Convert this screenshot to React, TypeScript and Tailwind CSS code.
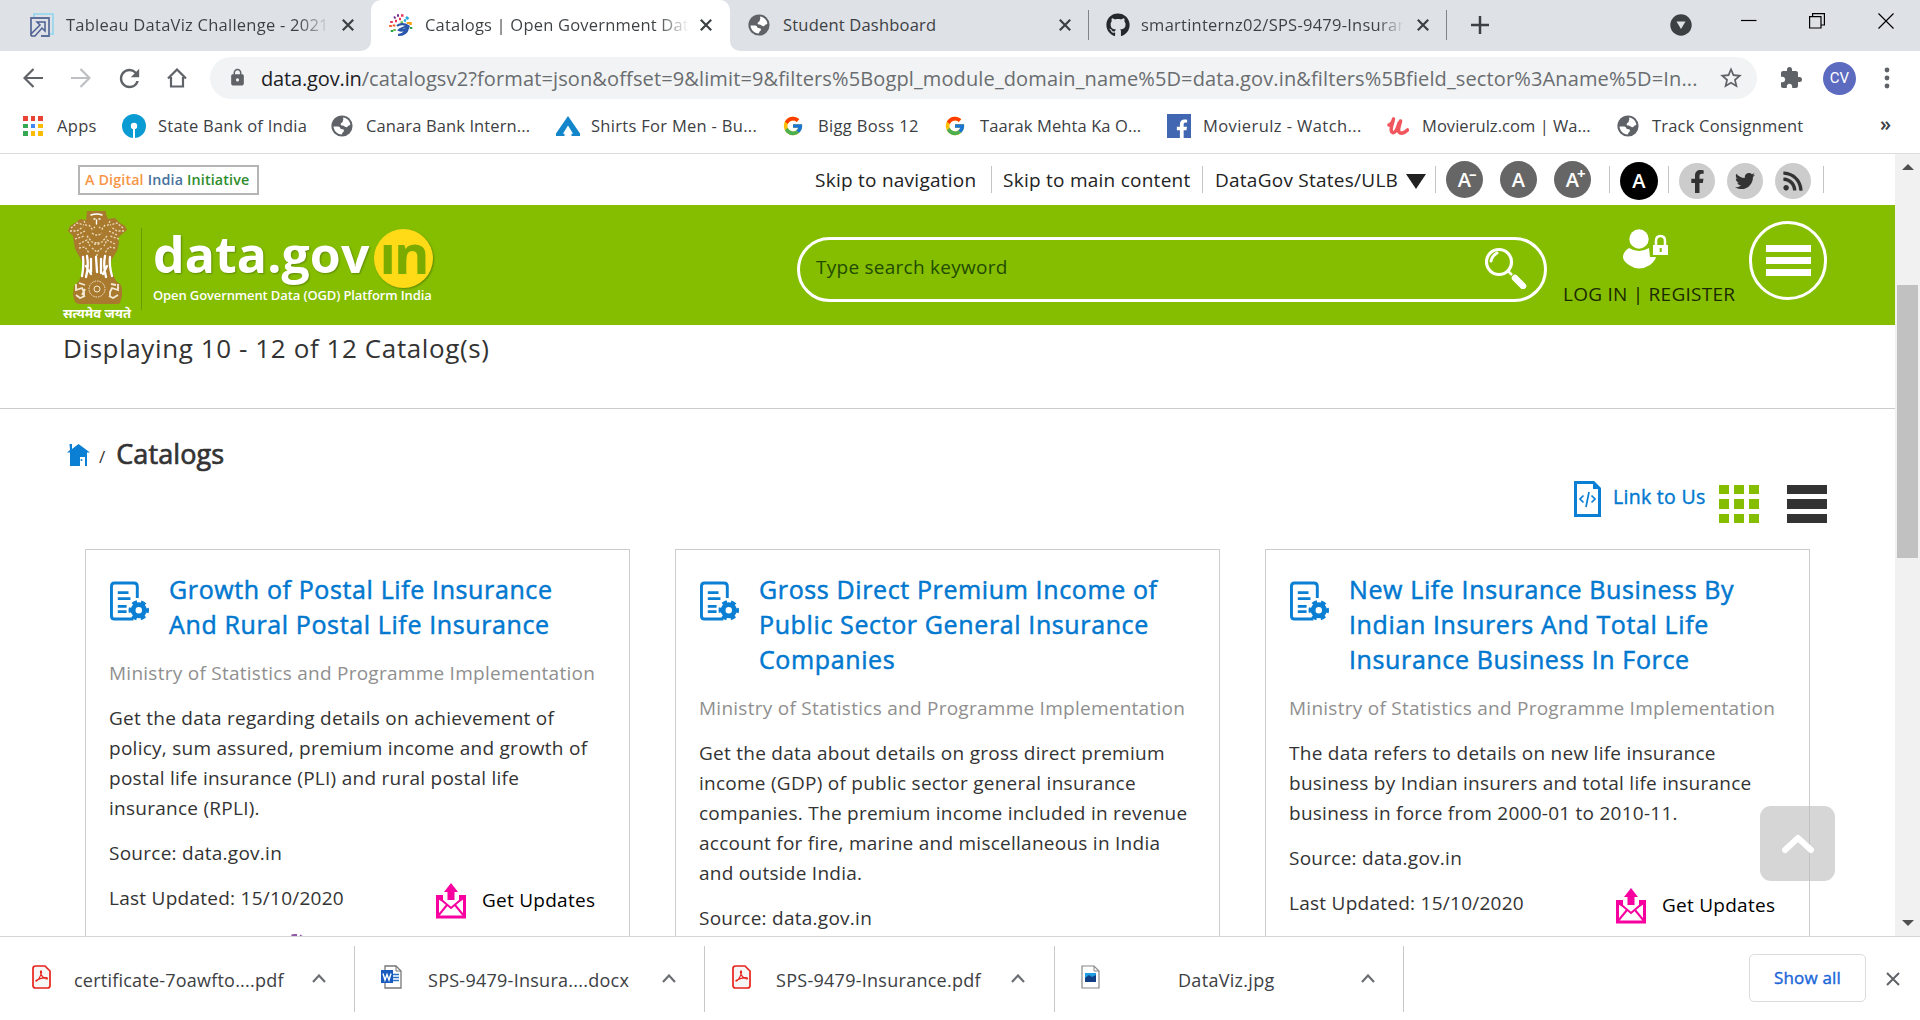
import React from "react";
import { FaFacebookF, FaGithub, FaTwitter, FaRss } from "react-icons/fa";
import { FcGoogle } from "react-icons/fc";
import { MdExtension, MdLock, MdRefresh, MdStarBorder } from "react-icons/md";

function Globe({ className = "" }: { className?: string }) {
  return (
    <svg viewBox="0 0 22 22" className={"h-[22px] w-[22px] shrink-0 " + className}>
      <circle cx="11" cy="11" r="10.6" fill="#5f6368" />
      <path d="M12.2 2.6c3.6.5 6.6 3.300 7.200 7-1 1.400-2 .7-2.700 1.900-.8 1.300-2.300.5-3.400-.3-1-.8-2.600-.3-3.400-1.200-.8-1.200.5-2.300 1.300-2.600 1-.4.3-1.600 1-2.300.5-.5-.4-1.400 0-2.500z" fill="#fff" />
      <path d="M2.500 11.500c2 .2 4-.5 5.600.3 1.400.7.7 1.900 2 2.300 1.500.4 2.600 0 2.800 1.300.2 1.500-1.500 1.500-1.600 2.600 0 .8-.3 1-.8 1.500-4.300-.2-7.600-3.500-8-8z" fill="#fff" />
    </svg>
  );
}

function TabClose({ className = "" }: { className?: string }) {
  return (
    <svg viewBox="0 0 12 12" className={"h-3 w-3 shrink-0 " + className} stroke="#3c4043" strokeWidth="2.2">
      <path d="M.8.8l10.400 10.400M11.200.8L.8 11.200" />
    </svg>
  );
}

function TabStrip() {
  return (
    <header className="flex h-[51px] bg-[#dee1e6] text-[16.500px] text-[#3c4043]">
      <div className="flex h-[51px] w-[371px] bg-white">
        <div className="flex w-full items-center rounded-br-[10px] bg-[#dee1e6] pb-px">
          <svg viewBox="0 0 24 24" className="ml-[30px] h-6 w-6 shrink-0" fill="none">
            <path d="M4 4V1h19v20h-4" stroke="#8fd6ee" strokeWidth="1.600" />
            <path d="M1 23V5h18v18h-8" stroke="#5d6f9b" strokeWidth="1.800" />
            <path d="M1 23l4 0 7-8 3 3V9H7l3 3-9 9" stroke="#4e5f93" strokeWidth="1.500" />
          </svg>
          <span className="ml-3 w-[264px] overflow-hidden whitespace-nowrap bg-gradient-to-r from-[#3c4043] from-88% to-transparent bg-clip-text text-transparent tracking-[0.25px]">Tableau DataViz Challenge - 2021</span>
          <TabClose className="ml-3" />
        </div>
      </div>
      <div className="flex w-[359px] items-center rounded-t-[10px] bg-white pb-px">
        <svg viewBox="0 0 24 24" className="ml-[18px] h-6 w-6 shrink-0" fill="none" strokeWidth="2.600">
          <path d="M8 2.500h2M5 5l1.500-1" stroke="#7b2c94" />
          <path d="M12 2.500h2.500M10 6h2" stroke="#e8365d" />
          <path d="M17 4l2.500 2M15 7l2 1" stroke="#25a9e0" />
          <path d="M21.500 9v3M19 9v2" stroke="#f6a21b" />
          <path d="M2.500 8v2M6 8h2" stroke="#e8365d" />
          <path d="M1.500 12v2M5 11.500v2" stroke="#f05a28" />
          <path d="M3 17v2M22 14v2" stroke="#2aa44c" />
          <path d="M5.500 16v2M11.500 9.500h2.500" stroke="#70bf44" />
          <path d="M8 13c2-2 7-3 11 0-3 1-7 2-9 4 2 1 6 0 9-2-1 5-5 7-10 7 3 0 6-2 8-4" stroke="#2b57ac" strokeWidth="2.200" />
        </svg>
        <span className="ml-3 w-[264px] overflow-hidden whitespace-nowrap bg-gradient-to-r from-[#3c4043] from-88% to-transparent bg-clip-text text-transparent tracking-[0.2px]">Catalogs | Open Government Dat</span>
        <TabClose className="ml-[11px]" />
      </div>
      <div className="flex flex-1 bg-white">
        <div className="flex flex-1 items-center rounded-bl-[10px] bg-[#dee1e6] pb-px">
          <Globe className="ml-[18px]" />
          <span className="ml-[13px] w-[276px] whitespace-nowrap tracking-[0.2px]">Student Dashboard</span>
          <TabClose />
          <div className="ml-[17px] h-[30px] w-px bg-[#808387]" />
          <FaGithub className="ml-[17px] h-6 w-6 shrink-0 text-[#24292e]" />
          <span className="ml-[11px] w-[263px] overflow-hidden whitespace-nowrap bg-gradient-to-r from-[#3c4043] from-90% to-transparent bg-clip-text text-transparent tracking-[0.25px]">smartinternz02/SPS-9479-Insurar</span>
          <TabClose className="ml-[13px]" />
          <div className="ml-[17px] h-[30px] w-px bg-[#808387]" />
          <svg viewBox="0 0 18 18" className="ml-6 h-[18px] w-[18px] shrink-0" stroke="#3c4043" strokeWidth="2.500">
            <path d="M9 0v18M0 9h18" />
          </svg>
          <svg viewBox="0 0 22 22" className="ml-[181px] h-[22px] w-[22px] shrink-0">
            <circle cx="11" cy="11" r="10.700" fill="#3c4043" />
            <path d="M6.500 7.500h9L11 15z" fill="#dee1e6" />
          </svg>
          <svg viewBox="0 0 16 16" className="mb-2 ml-[49px] h-4 w-4 shrink-0" stroke="#000" strokeWidth="1.200">
            <path d="M0 7.500h15.500" />
          </svg>
          <svg viewBox="0 0 16 16" className="mb-2 ml-[52px] h-4 w-4 shrink-0" fill="none" stroke="#000" strokeWidth="1.200">
            <path d="M.6 3.600h11.400v11.400H.6zM3.600 3.600V.6H15.400V12H12" />
          </svg>
          <svg viewBox="0 0 16 16" className="mb-2 ml-[53px] h-4 w-4 shrink-0" stroke="#000" strokeWidth="1.200">
            <path d="M.5.500l15 15M15.500.500l-15 15" />
          </svg>
        </div>
      </div>
    </header>
  );
}

function Toolbar() {
  return (
    <div className="flex h-[54px] items-center bg-white pl-[23px]">
      <svg viewBox="0 0 20 20" className="h-5 w-5" fill="none" stroke="#5f6368" strokeWidth="2.200">
        <path d="M20 10H2M10.500 1L1.500 10l9 9" />
      </svg>
      <svg viewBox="0 0 20 20" className="ml-7 h-5 w-5" fill="none" stroke="#bdbfc2" strokeWidth="2.200">
        <path d="M0 10h18M9.500 1l9 9-9 9" />
      </svg>
      <MdRefresh className="ml-[24px] h-[29px] w-[29px] text-[#5f6368]" />
      <svg viewBox="0 0 20 20" className="ml-[23px] h-5 w-5" fill="none" stroke="#5f6368" strokeWidth="2.200">
        <path d="M1 10.500L10 1.500l9 9M4 9v9.500h12V9" />
      </svg>
      <div className="ml-[23px] flex h-[42px] w-[1547px] items-center rounded-full bg-[#f1f3f4]">
        <MdLock className="mb-px ml-[18px] h-[19px] w-[19px] shrink-0 text-[#5f6368]" />
        <span className="ml-[14px] mt-px w-[1440px] whitespace-nowrap text-[20px] tracking-[0.125px] text-[#6a6d70]">
          <span className="tracking-[-0.15px] text-[#202124]">data.gov.in</span>/catalogsv2?format=json&amp;offset=9&amp;limit=9&amp;filters%5Bogpl_module_domain_name%5D=data.gov.in&amp;filters%5Bfield_sector%3Aname%5D=In...
        </span>
        <MdStarBorder className="ml-[17px] h-[26px] w-[26px] shrink-0 text-[#5f6368]" />
      </div>
      <MdExtension className="ml-[22px] h-6 w-6 text-[#5f6368]" />
      <div className="ml-5 flex h-[33px] w-[33px] items-center justify-center rounded-full bg-[#5c6bc0] font-['Roboto'] text-[15px] text-white">CV</div>
      <svg viewBox="0 0 6 22" className="ml-7 h-[22px] w-1.5" fill="#5f6368">
        <circle cx="3" cy="3" r="2.400" />
        <circle cx="3" cy="11" r="2.400" />
        <circle cx="3" cy="19" r="2.400" />
      </svg>
    </div>
  );
}

function Bookmarks() {
  const dots = ["#ea4335", "#ea4335", "#ea4335", "#34a853", "#4285f4", "#fbbc05", "#34a853", "#fbbc05", "#fbbc05"];
  return (
    <div className="flex h-[48px] items-center whitespace-nowrap bg-white pb-1.5 pl-[23px] text-[16.500px] text-[#3c4043]">
      <div className="grid h-5 w-5 shrink-0 grid-cols-3 gap-[3px]">
        {dots.map((c, i) => (
          <i key={i} style={{ backgroundColor: c }} />
        ))}
      </div>
      <span className="ml-[14px] w-[65px] tracking-[0.3px]">Apps</span>
      <svg viewBox="0 0 24 24" className="h-6 w-6 shrink-0">
        <circle cx="12" cy="12" r="12" fill="#0b9bd3" />
        <circle cx="12" cy="12" r="3.200" fill="#fff" />
        <path d="M11 12h2v12h-2z" fill="#fff" />
      </svg>
      <span className="ml-3 w-[173px] tracking-[0.25px]">State Bank of India</span>
      <Globe />
      <span className="ml-[13px] w-[190px] tracking-[0.12px]">Canara Bank Intern...</span>
      <svg viewBox="0 0 24 20" className="h-5 w-6 shrink-0" fill="#1385cb">
        <path d="M12 0l12 17.500V20h-8.500v-2.200h1.600L12 9.500l-5.100 8.300h1.600V20H0v-2.500z" />
      </svg>
      <span className="ml-[11px] w-[191px] tracking-[0.3px]">Shirts For Men - Bu...</span>
      <FcGoogle className="h-[22px] w-[22px] shrink-0" />
      <span className="ml-[14px] w-[126px] tracking-[0.35px]">Bigg Boss 12</span>
      <FcGoogle className="h-[22px] w-[22px] shrink-0" />
      <span className="ml-[14px] w-[187px] tracking-[0.1px]">Taarak Mehta Ka O...</span>
      <div className="flex h-6 w-6 shrink-0 items-end justify-end overflow-hidden bg-[#4267b2] pr-[3px]">
        <FaFacebookF className="-mb-px h-5 w-3 text-white" />
      </div>
      <span className="ml-3 w-[184px] tracking-[0.42px]">Movierulz - Watch...</span>
      <svg viewBox="0 0 22 22" className="h-[22px] w-[22px] shrink-0" fill="none" stroke="#f0565b" strokeLinecap="round" strokeLinejoin="round">
        <path d="M2 10c2-.5 3.500-2.500 4.500-6-.8 5-3 8-2.200 12 .3 2 2.500 2.500 4.200.3C10.500 14 11 11 12 8" strokeWidth="3.400" />
        <path d="M13.500 6c-1 5-3 8-1.500 11 1.500 2 5 1.500 8.500-2" strokeWidth="3.600" />
      </svg>
      <span className="ml-[13px] w-[195px] tracking-[0.05px]">Movierulz.com | Wa...</span>
      <Globe />
      <span className="ml-[13px] w-[228px] tracking-[0.2px]">Track Consignment</span>
      <span className="pb-1 text-[20px] font-semibold">»</span>
    </div>
  );
}

function TextSizeButton({ mark, className = "" }: { mark?: string; className?: string }) {
  return (
    <div className={"relative flex h-[37px] w-[37px] shrink-0 items-center justify-center rounded-full bg-[#666] text-[20px] font-semibold text-white " + className}>
      A
      {mark && <span className="absolute left-[23px] top-0 text-[15px] font-bold leading-6">{mark}</span>}
    </div>
  );
}

function Divider({ className = "" }: { className?: string }) {
  return <div className={"h-[27px] w-px shrink-0 bg-[#c4c4c4] " + className} />;
}

function UtilityBar() {
  return (
    <div className="flex h-[51px] items-center whitespace-nowrap text-[19px] tracking-[0.25px] text-[#222]">
      <div className="ml-[78px] flex h-[30px] w-[181px] shrink-0 items-center gap-1 border-2 border-[#b5b5b5] pl-[5px] text-[14.300px] font-semibold tracking-[0.14px]">
        <span className="text-[#f79646]">A Digital</span>
        <span className="text-[#48729c]">India</span>
        <span className="text-[#2c8c2c]">Initiative</span>
      </div>
      <span className="ml-[556px] mt-px w-[176px]">Skip to navigation</span>
      <Divider />
      <span className="ml-[11px] mt-px w-[199px]">Skip to main content</span>
      <Divider />
      <span className="ml-3 mt-px w-[191px]">DataGov States/ULB</span>
      <svg viewBox="0 0 20 15" className="mt-[3px] h-[15px] w-5 shrink-0" fill="#222">
        <path d="M0 0h20L10 15z" />
      </svg>
      <Divider className="ml-[9px]" />
      <TextSizeButton mark="–" className="ml-[10px]" />
      <TextSizeButton className="ml-[17px]" />
      <TextSizeButton mark="+" className="ml-[17px]" />
      <Divider className="ml-[18px]" />
      <div className="ml-[10px] mt-0.5 flex h-[38px] w-[38px] shrink-0 items-center justify-center rounded-full bg-black text-[20px] font-semibold text-white">A</div>
      <Divider className="ml-[10px]" />
      <div className="ml-[10px] mt-[3px] flex h-9 w-9 shrink-0 items-center justify-center rounded-full bg-[#ccc] text-[#333]">
        <FaFacebookF className="h-[23px] w-[23px]" />
      </div>
      <div className="ml-3 mt-[3px] flex h-9 w-9 shrink-0 items-center justify-center rounded-full bg-[#ccc] text-[#333]">
        <FaTwitter className="h-5 w-5" />
      </div>
      <div className="ml-3 mt-[3px] flex h-9 w-9 shrink-0 items-center justify-center rounded-full bg-[#ccc] text-[#333]">
        <FaRss className="h-[22px] w-[22px]" />
      </div>
      <Divider className="ml-3" />
    </div>
  );
}

function Emblem() {
  return (
    <svg viewBox="0 0 60 93" className="h-[93px] w-[60px]" fill="#a97a2d">
      <path d="M20 0h19v3l2 5 7-1 5 5 5 3 2 4-6 5-3 3 1 5-2 8-5 8-2 5 2 8 4 9 5 4 1 5v6l-2 7-4 2-2 4H15l-2-4-5-3-2-7 1-9 5-5 3-8 1-9-4-8-4-7-1-6-1-7-5-5 2-5 5-3 5-4 6 1z" />
      <g stroke="#fff" fill="none" strokeLinecap="round">
        <path d="M16 46q1 8-1 19M20 45q2 10-1 21M24 48v13M29 46l1 15M34 48v14M38 45q-2 10 1 21M43 46q-1 8 2 19M19 55l5 8M40 55l-4 8" strokeWidth="2.300" />
        <path d="M24 4q6-2 11 0M27 8h1M32 8h1M29.500 9v4" strokeWidth="1.400" />
      </g>
      <g stroke="#ecdcbc" fill="none" strokeWidth="1.300" strokeDasharray="2 1.500">
        <path d="M4 17l6-5 7 2M3 20h7l6-4M10 24l8-4M8 28l9-3M12 33l8-4 3 6M12 37l6-1 4 6M20 25l5 6 5 1M17 10l3 6M22 14l3 4 3-2" />
        <path d="M56 17l-6-5-7 2M57 20h-7l-6-4M50 24l-8-4M52 28l-9-3M48 33l-8-4-3 6M48 37l-6-1-4 6M40 25l-5 6-5 1M43 10l-3 6M38 14l-3 4-3-2" />
        <path d="M25 37l5 4 5-4M27 33h6M30 43v3M25 22q5 4 10 0" />
      </g>
      <g stroke="#f4ead6" fill="none" strokeWidth="1.800">
        <circle cx="30" cy="78" r="8" strokeWidth="1" strokeDasharray="1.500 1" />
        <circle cx="30" cy="78" r="3" strokeWidth="1" />
        <path d="M9 73v6l6-2 2 4v5M12 72l6 2M9 84l4 3 5-2M18 78l-3 6" />
        <path d="M51 73v6l-6-2-2 4v5M44 73l5 1M51 84l-5 3-4-2" />
      </g>
    </svg>
  );
}

function Masthead() {
  return (
    <div className="flex h-[120px] bg-[#85be00]">
      <div className="ml-[59px] mt-1.5 flex w-[76px] flex-col items-center">
        <Emblem />
        <span className="mt-px whitespace-nowrap font-['Noto_Sans_Devanagari','Noto_Sans',sans-serif] text-[13px] font-bold leading-[20px] text-white">सत्यमेव जयते</span>
      </div>
      <div className="ml-1.5 mt-[23px] h-[82px] w-px bg-[#6a9c00]" />
      <div className="ml-[11px] mt-6 w-[282px]">
        <div className="flex h-[59px]">
          <span className="w-[221px] text-[50px] font-bold leading-[50px] tracking-[0.1px] text-white [text-shadow:1px_1px_2px_#5f8a00]">data.gov</span>
          <span className="flex h-[59px] w-[59px] shrink-0 items-center justify-center rounded-full bg-[#fedb16] pb-3 text-[54px] font-bold leading-[54px] tracking-[-2px] text-[#7cab00] shadow-[1px_1px_2px_#5f8a00]">ın</span>
        </div>
        <span className="-mt-px block whitespace-nowrap text-[13px] font-semibold leading-4 tracking-[-0.12px] text-white">Open Government Data (OGD) Platform India</span>
      </div>
      <div className="ml-[362px] mt-8 flex h-[65px] w-[750px] items-center rounded-full border-[3px] border-white text-[#224b00]">
        <span className="mb-1 ml-4 flex-1 text-[19px] tracking-[0.26px]">Type search keyword</span>
        <svg viewBox="0 0 42 42" className="mb-1 mr-[17px] h-[42px] w-[42px]" fill="none" stroke="#fff">
          <circle cx="14" cy="15" r="12.500" strokeWidth="3.200" />
          <path d="M6 14q1-5 6-8" strokeWidth="3" strokeLinecap="round" />
          <path d="M23 24l4 4" strokeWidth="2.500" />
          <path d="M30 31l8 8" strokeWidth="6.500" strokeLinecap="round" />
        </svg>
      </div>
      <div className="ml-4 flex w-[172px] flex-col">
        <svg viewBox="0 0 46 40" className="ml-[60px] mt-6 h-10 w-[46px]" fill="#fff">
          <circle cx="16" cy="10" r="9.700" />
          <path d="M6 19q10 6 20 0l1 9h6q-1 4-6 8-11 7-21 0-6-4-6-8 0-5 6-9z" />
          <path d="M30 16h15v10H30z" />
          <path d="M33 16v-4q0-5 4.500-5t4.500 5v4" fill="none" stroke="#fff" strokeWidth="2.500" />
          <path d="M36.700 19h2v4h-2z" fill="#85be00" />
        </svg>
        <span className="mt-3 whitespace-nowrap text-[19px] leading-[26px] tracking-[0.25px] text-[#1c2a00]">LOG IN | REGISTER</span>
      </div>
      <div className="ml-[14px] mt-4 flex h-[79px] w-[78px] shrink-0 flex-col items-center justify-center gap-[5px] rounded-full border-[3px] border-white">
        <i className="h-[7px] w-[45px] bg-white" />
        <i className="h-[7px] w-[45px] bg-white" />
        <i className="h-[7px] w-[45px] bg-white" />
      </div>
    </div>
  );
}

function CatalogIcon() {
  return (
    <svg viewBox="0 0 40 40" className="ml-px mt-[31px] h-10 w-[39px] shrink-0" fill="none" stroke="#0a7fd4">
      <path d="M28 17V5q0-3.500-3.500-3.500H4.500Q1.500 1.500 1.500 5v30q0 3.500 3 3.500H24" strokeWidth="3" />
      <path d="M8 11.500h11M8 17.500h13M8 25.500h9M8 31h9" strokeWidth="2.800" />
      <circle cx="29.500" cy="29.500" r="5.800" strokeWidth="5" />
      <circle cx="29.500" cy="29.500" r="8.700" strokeWidth="3.600" strokeDasharray="5 4.110" strokeDashoffset="2.500" />
    </svg>
  );
}

type Catalog = { title: string[]; body: string[]; updates: boolean; speck?: boolean };

const catalogs: Catalog[] = [
  {
    title: ["Growth of Postal Life Insurance", "And Rural Postal Life Insurance"],
    body: ["Get the data regarding details on achievement of", "policy, sum assured, premium income and growth of", "postal life insurance (PLI) and rural postal life", "insurance (RPLI)."],
    updates: true,
    speck: true,
  },
  {
    title: ["Gross Direct Premium Income of", "Public Sector General Insurance", "Companies"],
    body: ["Get the data about details on gross direct premium", "income (GDP) of public sector general insurance", "companies. The premium income included in revenue", "account for fire, marine and miscellaneous in India", "and outside India."],
    updates: false,
  },
  {
    title: ["New Life Insurance Business By", "Indian Insurers And Total Life", "Insurance Business In Force"],
    body: ["The data refers to details on new life insurance", "business by Indian insurers and total life insurance", "business in force from 2000-01 to 2010-11."],
    updates: true,
  },
];

function CatalogCard({ title, body, updates, speck }: Catalog) {
  return (
    <article className="h-[500px] w-[545px] shrink-0 whitespace-nowrap border border-[#ccc] pl-[23px] text-[19px] leading-[30px] tracking-[0.26px] text-[#333]">
      <div className="flex">
        <CatalogIcon />
        <h2 className="ml-5 mt-[22px] pb-px text-[25px] font-normal leading-[35px] tracking-[0.62px] text-[#0078d0] [-webkit-text-stroke:0.5px_#0078d0]">
          {title.map((t) => (
            <span key={t} className="block">{t}</span>
          ))}
        </h2>
      </div>
      <p className="mt-[15px] text-[#8f8f8f]">Ministry of Statistics and Programme Implementation</p>
      <p className="mt-[15px]">
        {body.map((t) => (
          <span key={t} className="block">{t}</span>
        ))}
      </p>
      <p className="mt-[15px]">Source: data.gov.in</p>
      {updates && (
        <div className="mt-[15px] flex">
          <span className="w-[327px]">Last Updated: 15/10/2020</span>
          <svg viewBox="0 0 30 36" className="h-9 w-[30px] shrink-0" fill="none" stroke="#f800a0">
            <path d="M1.500 12v22h27V12" strokeWidth="3" />
            <path d="M2 14l13 11 13-11M2 33l9-11M28 33l-9-11" strokeWidth="2" />
            <path d="M0 12h7v7L0 15zM30 12h-7v7l7-4zM15 0l7 9h-3.500v8h-7V9H8z" fill="#f800a0" stroke="none" />
          </svg>
          <span className="ml-4 mt-0.5 text-black">Get Updates</span>
        </div>
      )}
      {speck && <div className="ml-[179px] mt-[15px] h-3 w-4 rounded-full border-[3px] border-dotted border-[#8e5aa8]" />}
    </article>
  );
}

function Page() {
  return (
    <main className="relative h-full w-[1895px] overflow-hidden bg-white">
      <UtilityBar />
      <Masthead />
      <div className="h-[84px] border-b border-[#ccc] pl-[63px] pt-[5px] text-[26px] leading-9 tracking-[0.6px] text-[#333]">Displaying 10 - 12 of 12 Catalog(s)</div>
      <div className="flex h-[67px] items-end pl-[67px] text-[#333]">
        <svg viewBox="0 0 23 22" className="mb-[10px] h-[22px] w-[23px]" fill="#0a7fd4">
          <path d="M2.500 0h2.500v5l6.500-5L23 8.500H20V22h-2v-9h-5v9H3V8.500H0l3-2.500z" />
          <circle cx="14.500" cy="16" r="1" />
        </svg>
        <span className="mb-[4px] ml-[9px] text-[17px] leading-[30px]">/</span>
        <h1 className="mb-px ml-[11px] text-[27px] font-normal leading-[42px] tracking-[0.1px] [-webkit-text-stroke:0.7px_#333]">Catalogs</h1>
      </div>
      <div className="flex h-[73px] pl-[1574px]">
        <svg viewBox="0 0 27 36" className="mt-[5px] h-9 w-[27px]" fill="none" stroke="#0a7fd4">
          <path d="M1.500 1.500h18l6 6v27h-24z" strokeWidth="3" />
          <path d="M19 0v8h8z" fill="#0a7fd4" stroke="none" />
          <path d="M9.500 14.500L6 18l3.500 3.500M17.500 14.500L21 18l-3.500 3.500M15 11l-3 15" strokeWidth="1.700" />
        </svg>
        <a className="ml-3 mt-[6px] w-[106px] whitespace-nowrap text-[19.500px] leading-[30px] tracking-[0.3px] text-[#0078d0] [-webkit-text-stroke:0.4px_#0078d0]">Link to Us</a>
        <div className="mt-[9px] grid h-[38px] w-10 grid-cols-3 gap-x-[5px] gap-y-[5px]">
          {Array.from({ length: 9 }, (_, i) => (
            <i key={i} className="bg-[#85be00]" />
          ))}
        </div>
        <div className="ml-7 mt-[9px] grid h-[38px] w-10 gap-[5px]">
          <i className="bg-[#333]" />
          <i className="bg-[#333]" />
          <i className="bg-[#333]" />
        </div>
      </div>
      <div className="flex gap-[45px] pl-[85px]">
        {catalogs.map((c) => (
          <CatalogCard key={c.title[0]} {...c} />
        ))}
      </div>
      <button className="absolute left-[1760px] top-[652px] flex h-[75px] w-[75px] items-center justify-center rounded-[11px] bg-[#bbb]/60">
        <svg viewBox="0 0 32 20" className="h-5 w-8" fill="none" stroke="#fff" strokeWidth="6" strokeLinecap="round">
          <path d="M3 16L16 4l13 12" strokeLinejoin="round" />
        </svg>
      </button>
    </main>
  );
}

function Scrollbar() {
  return (
    <div className="flex w-[25px] flex-col items-center bg-[#f1f1f1]">
      <svg viewBox="0 0 12 6" className="mt-[10px] h-1.5 w-3" fill="#505050"><path d="M6 0l6 6H0z" /></svg>
      <div className="mt-[115px] h-[273px] w-[21px] bg-[#c1c1c1]" />
      <svg viewBox="0 0 12 6" className="mb-[10px] mt-auto h-1.5 w-3" fill="#505050"><path d="M6 6l6-6H0z" /></svg>
    </div>
  );
}

function PdfIcon() {
  return (
    <svg viewBox="0 0 19 24" className="h-6 w-[19px] shrink-0" fill="none" stroke="#e8231a">
      <path d="M3.500 1h9.500L18 6v14.500Q18 23 15.500 23h-12Q1 23 1 20.500v-17Q1 1 3.500 1z" fill="#f6f6f6" strokeWidth="1.700" />
      <path d="M4 16c1.500.5 5-5 5.500-8.500.2-2-1-2-1-.3 0 3 3.500 6.500 6 6.800 1.500.2 1.200-1.400-.5-1.400-3 0-7 1-9.500 2.700-.8.700-.8.700-.5.700z" strokeWidth="1.200" />
    </svg>
  );
}

function WordIcon() {
  return (
    <svg viewBox="0 0 21 24" className="h-6 w-[21px] shrink-0">
      <path d="M4 1h11l5 5v17H4z" fill="#fff" stroke="#777" strokeWidth="1.300" />
      <path d="M15 1v5h5" fill="none" stroke="#777" />
      <path d="M12 9.500h6M12 12.500h6M12 15.500h6" stroke="#2b73c7" strokeWidth="1.300" />
      <path d="M0 5h12v13H0z" fill="#185abd" />
      <path d="M2 8.500l2 6.500 2-5.500L8 15l2-6.500" fill="none" stroke="#fff" strokeWidth="1.400" />
    </svg>
  );
}

function ImageIcon() {
  return (
    <svg viewBox="0 0 19 24" className="h-6 w-[19px] shrink-0">
      <path d="M1 1h12l5 5v17H1z" fill="#fff" stroke="#888" strokeWidth="1.200" />
      <path d="M13 1v5h5" fill="none" stroke="#888" />
      <path d="M4 8h11v9H4z" fill="#1e9de0" />
      <path d="M4 13l4-3 3 2 4-2v7H4z" fill="#123f83" />
    </svg>
  );
}

function Caret() {
  return (
    <svg viewBox="0 0 14 9" className="h-[9px] w-[14px] shrink-0" fill="none" stroke="#6b6e72" strokeWidth="2.200">
      <path d="M1 8l6-6.500L13 8" />
    </svg>
  );
}

function Downloads() {
  const sep = "h-[66px] w-px shrink-0 bg-[#c8c8c8]";
  return (
    <footer className="flex h-[84px] items-center whitespace-nowrap border-t border-[#d5d6d9] bg-white text-[18px] tracking-[0.22px] text-[#3c4043]">
      <div className="flex w-[354px] items-center pl-[32px]">
        <div className="mb-1"><PdfIcon /></div>
        <span className="ml-[23px] mt-[3px] w-[238px]">certificate-7oawfto....pdf</span>
        <Caret />
      </div>
      <div className={sep} />
      <div className="flex w-[349px] items-center pl-[26px]">
        <div className="mb-1"><WordIcon /></div>
        <span className="ml-[26px] mt-[3px] w-[234px] tracking-[0.26px]">SPS-9479-Insura....docx</span>
        <Caret />
      </div>
      <div className={sep} />
      <div className="flex w-[349px] items-center pl-[27px]">
        <div className="mb-1"><PdfIcon /></div>
        <span className="ml-[25px] mt-[3px] w-[235px] tracking-[0.27px]">SPS-9479-Insurance.pdf</span>
        <Caret />
      </div>
      <div className={sep} />
      <div className="flex w-[348px] items-center pl-[26px]">
        <div className="mb-1"><ImageIcon /></div>
        <span className="ml-[78px] mt-[3px] w-[183px] tracking-[0.3px]">DataViz.jpg</span>
        <Caret />
      </div>
      <div className={sep} />
      <button className="mb-0.5 ml-[345px] h-[48px] w-[117px] shrink-0 rounded-[5px] border border-[#dadce0] text-[17px] tracking-[0.2px] text-[#1a66d9] [-webkit-text-stroke:0.4px_#1a66d9]">Show all</button>
      <svg viewBox="0 0 14 14" className="ml-5 h-[14px] w-[14px] shrink-0" stroke="#5f6368" strokeWidth="2">
        <path d="M1 1l12 12M13 1L1 13" />
      </svg>
    </footer>
  );
}

export default function App() {
  return (
    <div className="flex h-[1020px] w-[1920px] flex-col overflow-hidden bg-white font-['Open_Sans',sans-serif]">
      <TabStrip />
      <Toolbar />
      <Bookmarks />
      <div className="flex h-[783px] border-t border-[#dadce0]">
        <Page />
        <Scrollbar />
      </div>
      <Downloads />
    </div>
  );
}
